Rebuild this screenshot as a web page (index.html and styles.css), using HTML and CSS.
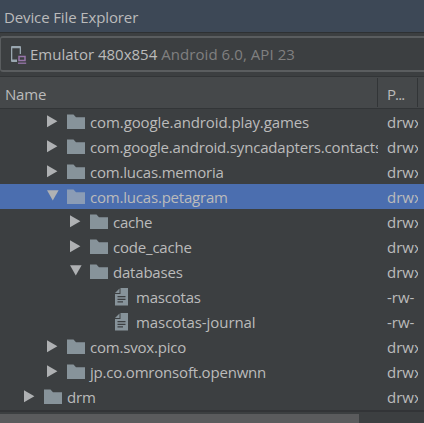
FILE: index.html
```
<!DOCTYPE html>
<html lang="en">
<head>
<meta charset="utf-8">
<title>Device File Explorer</title>
<link rel="stylesheet" href="styles.css">
</head>
<body>
<svg class="defs" width="0" height="0">
  <symbol id="closed" viewBox="0 0 12 13"><path fill="#afb1b3" d="M0 .3 10.4 6.3 0 12.3z"/></symbol>
  <symbol id="open" viewBox="0 0 12 13"><path fill="#afb1b3" d="M0 .2H11.6L5.8 10.6z"/></symbol>
  <symbol id="folder" viewBox="0 0 18 15"><path fill="currentColor" d="M0 .5H6.5L9 3.3H18V15H0z"/></symbol>
  <symbol id="file" viewBox="0 0 13 18"><path fill="#87939a" d="M5.5 0H13V17.5H0V6H5.5z"/><path fill="#87939a" d="M4.5 .5V5H0z"/><path stroke="#3c3f41" stroke-width="1.2" d="M2.5 8.7H10.5M2.5 11.3H10.5M2.5 13.8H8"/></symbol>
</svg>
<header class="title"><span class="t-title">Device File Explorer</span></header>
<div class="toolbar"><div class="combo">
  <svg class="device" width="16" height="18" viewBox="0 0 16 18"><path fill="#9aa7b0" fill-rule="evenodd" d="M1 0H9Q10 0 10 1V8H8.7V2.3H1.3V13.5H6V16H1Q0 16 0 15V1Q0 0 1 0z"/><path fill="none" stroke="#9876aa" stroke-width="1.5" d="M8 10.5H14V14.5H8z"/><path stroke="#9876aa" stroke-width="1.3" d="M7 17.2H15.2"/></svg>
  <span class="t-device">Emulator 480x854</span><span class="t-api">Android 6.0, API 23</span>
</div></div>
<div class="columns"><div class="name"><span class="t-name">Name</span></div><div class="perm"><span class="t-p">P...</span></div></div>
<main class="tree">
  <div class="row l1"><div class="name"><svg class="arrow"><use href="#closed"/></svg><svg class="folder"><use href="#folder"/></svg><span class="t-games">com.google.android.play.games</span></div><div class="perm">drwx</div></div>
  <div class="row l1"><div class="name"><svg class="arrow"><use href="#closed"/></svg><svg class="folder"><use href="#folder"/></svg><span class="t-sync">com.google.android.syncadapters.contacts</span></div><div class="perm">drwx</div></div>
  <div class="row l1"><div class="name"><svg class="arrow"><use href="#closed"/></svg><svg class="folder"><use href="#folder"/></svg><span class="t-memoria">com.lucas.memoria</span></div><div class="perm">drwx</div></div>
  <div class="row l1 selected"><div class="name"><svg class="arrow"><use href="#open"/></svg><svg class="folder"><use href="#folder"/></svg><span class="t-petagram">com.lucas.petagram</span></div><div class="perm">drwx</div></div>
  <div class="row l2"><div class="name"><svg class="arrow"><use href="#closed"/></svg><svg class="folder"><use href="#folder"/></svg><span class="t-cache">cache</span></div><div class="perm">drwx</div></div>
  <div class="row l2"><div class="name"><svg class="arrow"><use href="#closed"/></svg><svg class="folder"><use href="#folder"/></svg><span class="t-code">code_cache</span></div><div class="perm">drwx</div></div>
  <div class="row l2"><div class="name"><svg class="arrow"><use href="#open"/></svg><svg class="folder"><use href="#folder"/></svg><span class="t-db">databases</span></div><div class="perm">drwx</div></div>
  <div class="row l3"><div class="name"><svg class="file"><use href="#file"/></svg><span class="t-mascotas">mascotas</span></div><div class="perm file-perm">-rw-</div></div>
  <div class="row l3"><div class="name"><svg class="file"><use href="#file"/></svg><span class="t-journal">mascotas-journal</span></div><div class="perm file-perm">-rw-</div></div>
  <div class="row l1"><div class="name"><svg class="arrow"><use href="#closed"/></svg><svg class="folder"><use href="#folder"/></svg><span class="t-svox">com.svox.pico</span></div><div class="perm">drwx</div></div>
  <div class="row l1"><div class="name"><svg class="arrow"><use href="#closed"/></svg><svg class="folder"><use href="#folder"/></svg><span class="t-jp">jp.co.omronsoft.openwnn</span></div><div class="perm">drwx</div></div>
  <div class="row l0"><div class="name"><svg class="arrow"><use href="#closed"/></svg><svg class="folder"><use href="#folder"/></svg><span class="t-drm">drm</span></div><div class="perm">drwx</div></div>
</main>
<div class="scroll"><div class="thumb"></div></div>
</body>
</html>
```
FILE: styles.css
```
* { box-sizing: border-box; }
body {
  margin: 0;
  width: 424px;
  height: 423px;
  overflow: hidden;
  display: flex;
  flex-direction: column;
  background: #3c3f41;
  color: #bbbbbb;
  font: 15px/24px "Open Sans", "Noto Sans", sans-serif;
  letter-spacing: -0.2px;
  white-space: nowrap;
}
body > * { flex-shrink: 0; }
.defs { display: none; }
.title { height: 33px; padding: 5px 0 0 4px; background: #3d4856; border-bottom: 1px solid #2e3133; }
.t-title { letter-spacing: -0.12px; }
.toolbar { height: 43px; padding-top: 3px; }
.combo {
  height: 36px;
  display: flex;
  align-items: center;
  padding-left: 10px;
  border: 1px solid #5a5d5f;
  border-width: 2px 0 2px 1px;
  border-radius: 3px 0 0 3px;
}
.device { margin: 1px 3px 0 0; }
.t-device { padding-bottom: 1px; letter-spacing: 0; }
.t-api { padding-bottom: 1px; margin-left: 4px; color: #808080; letter-spacing: 0.06px; }
.columns {
  height: 33px;
  display: flex;
  background: #45484a;
  border-top: 1px solid #323537;
  border-bottom: 1px solid #323537;
}
.name { width: 378px; overflow: hidden; flex: none; }
.perm { width: 40px; padding-left: 9px; overflow: hidden; flex: none; letter-spacing: 0; }
.columns .name, .columns .perm { height: 29px; padding-top: 4px; border-right: 1px solid #323537; margin-top: 1px; }
.columns .name { padding-left: 5px; }
.t-p { letter-spacing: -0.9px; }
.row { height: 25px; display: flex; }
.row .name { display: flex; align-items: flex-start; }
.row .name span, .row .perm { line-height: 27px; height: 25px; }
.l0 .name { padding-left: 24px; }
.l1 .name { padding-left: 47px; }
.l2 .name { padding-left: 70px; }
.l3 .name { padding-left: 115px; }
.t-games { letter-spacing: -0.1px; }
.t-sync { letter-spacing: -0.18px; }
.t-journal { letter-spacing: -0.07px; }
.selected { background: #4b6eaf; }
.arrow { width: 12px; height: 13px; margin: 6px 8px 0 0; flex: none; }
.folder { width: 18px; height: 15px; margin: 5px 5px 0 0; flex: none; color: #87939a; }
.selected .folder { color: #8b9cb5; }
.file { width: 13px; height: 18px; margin: 4px 8px 0 0; flex: none; }
.scroll { height: 13px; margin-top: 1px; padding-top: 2px; border-top: 2px solid #323437; }
.thumb { width: 359px; height: 9px; background: #5a5b5d; }
```
